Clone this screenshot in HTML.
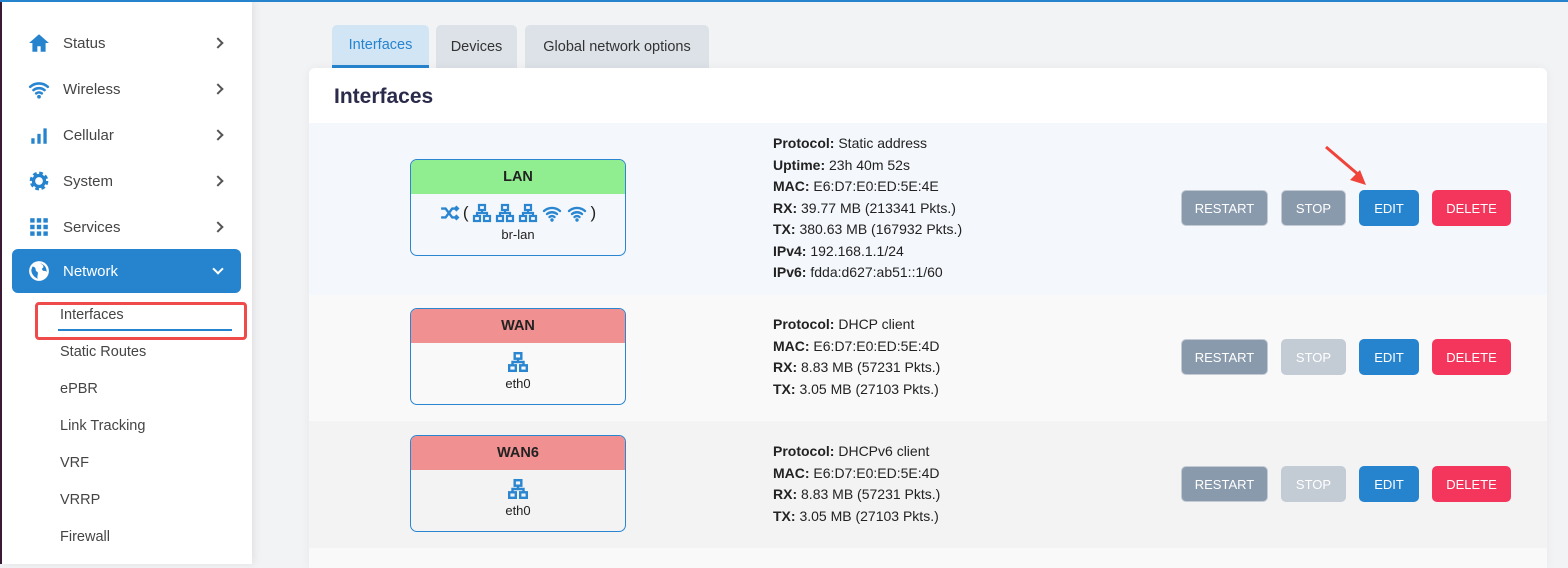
<!DOCTYPE html>
<html><head><meta charset="utf-8"><style>
*{box-sizing:border-box;margin:0;padding:0}
body{width:1568px;height:564px;overflow:hidden;background:#f2f3f5;font-family:"Liberation Sans",sans-serif;position:relative;color:#222}
.abs{position:absolute}
#top{left:0;top:0;width:1568px;height:2px;background:#2684cf}
#side{left:0;top:0;width:252px;height:564px;background:#fff;box-shadow:2px 0 8px rgba(0,0,0,.08);border-left:2px solid #3a1a35}
.mi{position:absolute;left:26px;width:210px;height:24px;font-size:15px;color:#444;display:flex;align-items:center}
.mi svg{width:22px;height:22px;margin-right:13px}
.mi .chev{position:absolute;left:186px;top:8px;width:8px;height:8px;border-right:2px solid #555;border-top:2px solid #555;transform:rotate(45deg)}
.sub{position:absolute;left:58px;font-size:14.5px;color:#444}
.tab{position:absolute;top:25px;height:43px;border-radius:5px 5px 0 0;font-size:14.5px;color:#333;display:flex;align-items:center;justify-content:center;background:#dce2e8}
#card{left:309px;top:68px;width:1238px;height:500px;background:#fff;border-radius:6px 6px 0 0;overflow:hidden;box-shadow:0 0 10px rgba(0,0,0,.05)}
.row{position:absolute;left:0;width:1238px}
.box{position:absolute;left:101px;width:216px;height:97px;border:1px solid #2a86d0;border-radius:7px;overflow:hidden;text-align:center}
.box .h{height:34px;line-height:34px;font-weight:bold;font-size:14.5px;color:#222}
.box .i{margin-top:8px;height:22px;color:#2a86d0}
.box .n{font-size:13px;color:#222;margin-top:3px}
.info{position:absolute;left:464px;font-size:14px;line-height:21.5px;color:#222}
.btn{position:absolute;height:36px;border-radius:5px;color:#fff;font-size:13px;display:flex;align-items:center;justify-content:center}
.rs{left:872px;width:87px;background:#8a9aad;border:1px solid #c3cad3}
.st{left:972px;width:65px;background:#8a9aad;border:1px solid #c3cad3}
.st.d{background:#c3cbd5;border-color:#c3cbd5}
.ed{left:1050px;width:60px;background:#2684cf}
.de{left:1123px;width:79px;background:#f5365c}
</style></head><body>
<svg width="0" height="0" style="position:absolute"><defs>
<symbol id="net" viewBox="0 0 20 20"><g fill="none" stroke="#2a86d0" stroke-width="2.2"><rect x="7" y="2" width="6" height="5"/><rect x="2" y="13" width="6" height="5"/><rect x="12" y="13" width="6" height="5"/><path d="M10 7v3M5 13v-3h10v3"/></g></symbol>
<symbol id="wifi" viewBox="0 0 20 20"><g fill="none" stroke="#2a86d0" stroke-width="2.4" stroke-linecap="round"><path d="M2 8a12 12 0 0 1 16 0M5 11a8 8 0 0 1 10 0M7.5 14a4 4 0 0 1 5 0"/></g><circle cx="10" cy="17" r="1.7" fill="#2a86d0"/></symbol>
</defs></svg>
<div id="side" class="abs">
 <div class="mi" style="top:31px"><svg viewBox="0 0 20 20"><path d="M10 2L1 10h3v8h4.5v-5h3v5H16v-8h3z" fill="#2684cf"/></svg>Status<span class="chev"></span></div>
 <div class="mi" style="top:77px"><svg viewBox="0 0 20 20"><use href="#wifi"/></svg>Wireless<span class="chev"></span></div>
 <div class="mi" style="top:123px"><svg viewBox="0 0 20 20"><path d="M3 13h3v5H3zM8.5 9h3v9h-3zM14 4h3v14h-3z" fill="#2684cf"/></svg>Cellular<span class="chev"></span></div>
 <div class="mi" style="top:169px"><svg viewBox="0 0 20 20"><circle cx="10" cy="10" r="6.5" fill="none" stroke="#2684cf" stroke-width="4" stroke-dasharray="3 2.1"/><circle cx="10" cy="10" r="5" fill="none" stroke="#2684cf" stroke-width="3"/></svg>System<span class="chev"></span></div>
 <div class="mi" style="top:215px"><svg viewBox="0 0 20 20"><g fill="#2684cf"><rect x="2" y="2" width="4" height="4"/><rect x="8" y="2" width="4" height="4"/><rect x="14" y="2" width="4" height="4"/><rect x="2" y="8" width="4" height="4"/><rect x="8" y="8" width="4" height="4"/><rect x="14" y="8" width="4" height="4"/><rect x="2" y="14" width="4" height="4"/><rect x="8" y="14" width="4" height="4"/><rect x="14" y="14" width="4" height="4"/></g></svg>Services<span class="chev"></span></div>
 <div class="abs" style="left:10px;top:249px;width:229px;height:44px;background:#2684cf;border-radius:6px"></div>
 <div class="mi" style="top:259px;color:#fff"><svg viewBox="0 0 20 20"><circle cx="10" cy="10" r="9" fill="#fff"/><path d="M4 6c2 0 3 1 3 3s2 1 2 3-1 3 0 5c-3-1-6-4-6-8zM11 3c1 1 3 1 3 3s-2 1-1 3 3 0 4 2c0-4-2-7-6-8z" fill="#2684cf"/></svg>Network<span class="chev" style="border-color:#fff;transform:rotate(135deg);top:6px"></span></div>
 <div class="abs" style="left:33px;top:302px;width:212px;height:38px;border:3px solid #f04b4b;border-radius:4px"></div>
 <div class="sub" style="top:307px">Interfaces</div>
 <div class="abs" style="left:56px;top:329px;width:174px;height:2px;background:#2684cf"></div>
 <div class="sub" style="top:344px">Static Routes</div>
 <div class="sub" style="top:381px">ePBR</div>
 <div class="sub" style="top:418px">Link Tracking</div>
 <div class="sub" style="top:455px">VRF</div>
 <div class="sub" style="top:492px">VRRP</div>
 <div class="sub" style="top:529px">Firewall</div>
</div>
<div id="top" class="abs"></div>
<div class="tab" style="left:332px;width:97px;background:#d2e5f5;color:#2684cf;border-bottom:3px solid #2684cf">Interfaces</div>
<div class="tab" style="left:436px;width:81px">Devices</div>
<div class="tab" style="left:525px;width:184px">Global network options</div>
<div id="card" class="abs">
 <div class="abs" style="left:25px;top:17px;font-size:21px;font-weight:bold;color:#2a2a4a">Interfaces</div>
 <div class="row" style="top:55px;height:172px;background:#f4f7fb">
  <div class="box" style="top:36px;background:#f4f7fb"><div class="h" style="background:#90ee90">LAN</div>
   <div class="i" style="display:flex;justify-content:center;align-items:center;gap:3px;font-size:17px">
    <svg width="20" height="16" viewBox="0 0 18 14"><path d="M1 3h4l6 8h5M1 11h4l6-8h5M14 1l2 2-2 2M14 9l2 2-2 2" fill="none" stroke="#2a86d0" stroke-width="2.2"/></svg><span style="color:#222">(</span>
    <svg width="20" height="20"><use href="#net"/></svg><svg width="20" height="20"><use href="#net"/></svg><svg width="20" height="20"><use href="#net"/></svg><svg width="22" height="20"><use href="#wifi"/></svg><svg width="22" height="20"><use href="#wifi"/></svg><span style="color:#222">)</span></div>
   <div class="n">br-lan</div></div>
  <div class="info" style="top:10px"><b>Protocol:</b> Static address<br><b>Uptime:</b> 23h 40m 52s<br><b>MAC:</b> E6:D7:E0:ED:5E:4E<br><b>RX:</b> 39.77 MB (213341 Pkts.)<br><b>TX:</b> 380.63 MB (167932 Pkts.)<br><b>IPv4:</b> 192.168.1.1/24<br><b>IPv6:</b> fdda:d627:ab51::1/60</div>
  <div class="btn rs" style="top:67px">RESTART</div><div class="btn st" style="top:67px">STOP</div><div class="btn ed" style="top:67px">EDIT</div><div class="btn de" style="top:67px">DELETE</div>
 </div>
 <div class="row" style="top:227px;height:126px;background:#f9f9f9">
  <div class="box" style="top:13px;background:#f9f9f9"><div class="h" style="background:#f09090">WAN</div><div class="i"><svg width="22" height="22"><use href="#net"/></svg></div><div class="n">eth0</div></div>
  <div class="info" style="top:19px"><b>Protocol:</b> DHCP client<br><b>MAC:</b> E6:D7:E0:ED:5E:4D<br><b>RX:</b> 8.83 MB (57231 Pkts.)<br><b>TX:</b> 3.05 MB (27103 Pkts.)</div>
  <div class="btn rs" style="top:44px">RESTART</div><div class="btn st d" style="top:44px">STOP</div><div class="btn ed" style="top:44px">EDIT</div><div class="btn de" style="top:44px">DELETE</div>
 </div>
 <div class="row" style="top:353px;height:127px;background:#f3f3f3">
  <div class="box" style="top:14px;background:#f3f3f3"><div class="h" style="background:#f09090">WAN6</div><div class="i"><svg width="22" height="22"><use href="#net"/></svg></div><div class="n">eth0</div></div>
  <div class="info" style="top:20px"><b>Protocol:</b> DHCPv6 client<br><b>MAC:</b> E6:D7:E0:ED:5E:4D<br><b>RX:</b> 8.83 MB (57231 Pkts.)<br><b>TX:</b> 3.05 MB (27103 Pkts.)</div>
  <div class="btn rs" style="top:45px">RESTART</div><div class="btn st d" style="top:45px">STOP</div><div class="btn ed" style="top:45px">EDIT</div><div class="btn de" style="top:45px">DELETE</div>
 </div>
 <div class="row" style="top:480px;height:40px;background:#f9f9f9"></div>
</div>
<svg class="abs" style="left:1320px;top:140px" width="55" height="52"><path d="M6 7L40 36" stroke="#f0443a" stroke-width="3"/><path d="M46 45L30 40L40 30z" fill="#f0443a"/></svg>
</body></html>
